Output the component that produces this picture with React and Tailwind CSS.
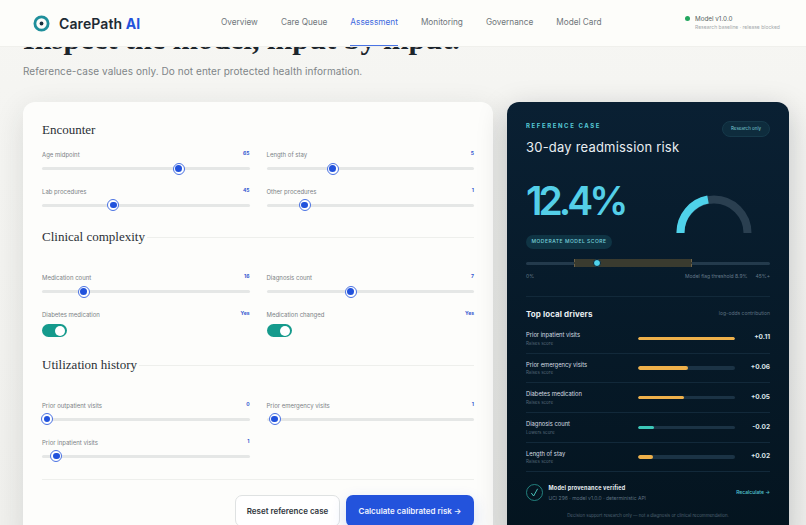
const nav = ['Overview', 'Care Queue', 'Assessment', 'Monitoring', 'Governance', 'Model Card']

const drivers = [
  { name: 'Prior inpatient visits', note: 'Raises score', width: 100, value: '+0.11', up: true },
  { name: 'Prior emergency visits', note: 'Raises score', width: 52, value: '+0.06', up: true },
  { name: 'Diabetes medication', note: 'Raises score', width: 47.5, value: '+0.05', up: true },
  { name: 'Diagnosis count', note: 'Lowers score', width: 17, value: '-0.02', up: false },
  { name: 'Length of stay', note: 'Raises score', width: 15.6, value: '+0.02', up: true },
]

function FieldHead({ label, value }) {
  return (
    <div className="flex h-[9px] items-center justify-between">
      <span className="text-[6px] leading-none text-[#7c8286]">{label}</span>
      <span className="-mt-[3px] text-[5px] font-bold leading-none text-[#3458d0]">{value}</span>
    </div>
  )
}

function Slider({ label, value, pos }) {
  return (
    <div className="h-[23.5px]">
      <FieldHead label={label} value={value} />
      <div className="relative mt-[3.5px] flex h-[11px] items-center">
        <div className="h-[3px] w-full rounded-full bg-[#e5e7e6]" />
        <div
          className="absolute flex h-[12px] w-[12px] -translate-x-1/2 items-center justify-center rounded-full border border-[#4a72e2] bg-white"
          style={{ left: `${pos}%` }}
        >
          <div className="h-[6.5px] w-[6.5px] rounded-full bg-[#2152dc]" />
        </div>
      </div>
    </div>
  )
}

function Toggle({ label }) {
  return (
    <div className="h-[27px]">
      <FieldHead label={label} value="Yes" />
      <div className="mt-[5px] flex h-[13px] w-[25px] items-center justify-end rounded-full bg-[#159a8c] pr-[2px]">
        <div className="h-[10px] w-[10px] rounded-full bg-white" />
      </div>
    </div>
  )
}

function SectionTitle({ children, line = true }) {
  return (
    <div className="flex h-4 items-center gap-[2px]">
      <h2 className="-mt-[2px] font-['Liberation_Serif',serif] text-[13px] leading-none text-[#2a3036]">{children}</h2>
      {line ? <div className="h-px flex-1 bg-[#eeefec]" /> : null}
    </div>
  )
}

function DriverRow({ item }) {
  return (
    <div className="grid h-[29.7px] grid-cols-[112px_97px_35px] items-center border-b border-[#12293a]">
      <div>
        <div className="text-[5.8px] leading-[9px] text-[#d5dde2]">{item.name}</div>
        <div className="mt-[0.5px] text-[4.5px] leading-[7px] text-[#536676]">{item.note}</div>
      </div>
      <div className="h-[3.5px] overflow-hidden rounded-full bg-[#1b3345]">
        <div className={`h-full rounded-full ${item.up ? 'bg-[#eeb04a]' : 'bg-[#3cc7b8]'}`} style={{ width: `${item.width}%` }} />
      </div>
      <div className="text-right text-[6.5px] font-bold text-[#dfe6ea]">{item.value}</div>
    </div>
  )
}

function Gauge() {
  return (
    <svg width="76" height="38" viewBox="0 0 76 38" className="mr-[18px] ml-auto mt-[14px] shrink-0">
      <path d="M4.5 38 A33.5 33.5 0 0 1 71.5 38" fill="none" stroke="#2a3f50" strokeWidth="8" />
      <path d="M4.5 38 A33.5 33.5 0 0 1 32 4.5" fill="none" stroke="#4fd2ea" strokeWidth="8" />
    </svg>
  )
}

function FormCard() {
  return (
    <section className="h-[440px] rounded-[12px] bg-[#fdfdfb] px-[19px] pt-[20px] shadow-[0_8px_30px_rgba(30,40,40,0.12)]">
      <SectionTitle line={false}>Encounter</SectionTitle>
      <div className="mt-[12.5px] grid grid-cols-2 gap-x-[17px] gap-y-[13px]">
        <Slider label="Age midpoint" value="65" pos={65.9} />
        <Slider label="Length of stay" value="5" pos={31.9} />
        <Slider label="Lab procedures" value="45" pos={34.4} />
        <Slider label="Other procedures" value="1" pos={18.4} />
      </div>
      <div className="mt-[18.5px]">
        <SectionTitle>Clinical complexity</SectionTitle>
      </div>
      <div className="mt-[28.5px] grid grid-cols-2 gap-x-[17px] gap-y-[13px]">
        <Slider label="Medication count" value="16" pos={20.1} />
        <Slider label="Diagnosis count" value="7" pos={40.5} />
        <Toggle label="Diabetes medication" />
        <Toggle label="Medication changed" />
      </div>
      <div className="mt-[20.5px]">
        <SectionTitle>Utilization history</SectionTitle>
      </div>
      <div className="mt-[27.5px] grid grid-cols-2 gap-x-[17px] gap-y-[13.5px]">
        <Slider label="Prior outpatient visits" value="0" pos={2.4} />
        <Slider label="Prior emergency visits" value="1" pos={3.9} />
        <Slider label="Prior inpatient visits" value="1" pos={6.9} />
      </div>
      <div className="mt-[17.5px] h-px bg-[#eeefec]" />
      <div className="mt-[14.5px] flex justify-end gap-[6px]">
        <button type="button" className="h-[32px] w-[105px] rounded-[7px] border border-[#dfe2e2] bg-white text-[8px] font-semibold text-[#30363c]">
          Reset reference case
        </button>
        <button type="button" className="h-[32px] w-[128px] rounded-[7px] bg-[#2353dc] text-[8px] font-semibold text-[#eef2ff] shadow-[0_6px_16px_rgba(35,83,220,0.18)]">
          Calculate calibrated risk →
        </button>
      </div>
    </section>
  )
}

function RiskCard() {
  return (
    <section className="h-[440px] rounded-[12px] bg-gradient-to-b from-[#0a2033] to-[#04141f] px-[19px] pt-[19px] shadow-[0_8px_30px_rgba(10,20,30,0.22)]">
      <div className="relative">
        <div className="h-[10px] text-[6px] font-bold leading-[10px] tracking-[1.6px] text-[#55c7d4]">REFERENCE CASE</div>
        <div className="absolute right-0 top-0 flex h-[16px] w-[48px] items-center justify-center rounded-full border border-[#16394a] bg-[#0e2c3d] text-[4.5px] text-[#79c8d4]">
          Research only
        </div>
        <h2 className="mt-[7px] h-[18px] text-[13px] leading-[18px] tracking-[0.2px] text-[#e8eef1]">30-day readmission risk</h2>
      </div>
      <div className="mt-[25px] flex">
        <div>
          <div className="h-[40px] text-[39px] font-semibold leading-[40px] tracking-[-4px] text-[#54cfe8]">12.4%</div>
          <div className="mt-[14px] flex h-[14px] w-[86px] items-center justify-center rounded-full bg-[#0f3444] text-[5px] font-medium tracking-[0.5px] text-[#79d3de]">
            MODERATE MODEL SCORE
          </div>
        </div>
        <Gauge />
      </div>
      <div className="relative mt-[10px] flex h-[8px] items-center">
        <div className="h-[3px] w-full rounded-full bg-[#233a4c]" />
        <div className="absolute left-[48px] h-[8px] w-[118px] border-x border-dashed border-[#6e6248] bg-[#3a3b2f]" />
        <div className="absolute left-[67px] h-[8px] w-[8px] rounded-full border border-[#0a2033] bg-[#4fd2ea]" />
      </div>
      <div className="mt-[5px] flex h-[8px] items-center justify-between text-[5px] leading-none text-[#64798a]">
        <span>0%</span>
        <span className="flex gap-[8px]">
          <span>Model flag threshold 8.9%</span>
          <span>45%+</span>
        </span>
      </div>
      <div className="mt-[16px] h-px bg-[#12293a]" />
      <div className="mt-[11.5px] flex h-[10px] items-center justify-between">
        <span className="text-[8px] font-bold leading-none tracking-[0.1px] text-[#e8eef1]">Top local drivers</span>
        <span className="text-[5px] leading-none text-[#5d7080]">log-odds contribution</span>
      </div>
      <div className="mt-[5.5px]">
        {drivers.map((d) => (
          <DriverRow key={d.name} item={d} />
        ))}
      </div>
      <div className="mt-[12px] flex h-[17px] items-center">
        <svg width="17" height="17" viewBox="0 0 17 17" className="shrink-0">
          <circle cx="8.5" cy="8.5" r="8" fill="none" stroke="#2b9c96" strokeWidth="0.8" />
          <path d="M5.3 9 L7.6 12 L11.6 4.8" fill="none" stroke="#4fd2c8" strokeWidth="0.9" />
        </svg>
        <div className="ml-[5.5px]">
          <div className="text-[5.5px] font-bold leading-[8px] tracking-[0.2px] text-[#e8eef1]">Model provenance verified</div>
          <div className="mt-[2px] text-[5px] leading-[8px] text-[#5d7080]">UCI 296 · model v1.0.0 · deterministic API</div>
        </div>
        <span className="ml-auto text-[5px] font-medium text-[#55c7d4]">Recalculate →</span>
      </div>
      <p className="mt-[11px] text-center text-[4.4px] leading-[8px] text-[#4f6272]">
        Decision support research only — not a diagnosis or clinical recommendation.
      </p>
    </section>
  )
}

export default function App() {
  return (
    <div className="relative h-[525px] w-[806px] overflow-hidden bg-gradient-to-b from-[#f6f6f3] to-[#f0f0ed] font-['Inter',sans-serif]">
      <header className="absolute inset-x-0 top-0 z-10 flex h-[47px] items-center border-b border-[#f0f0ec] bg-[#fdfdfa] pl-[33px]">
        <svg width="17" height="17" viewBox="0 0 17 17" className="shrink-0">
          <circle cx="8.5" cy="8.5" r="6.6" fill="none" stroke="#1f8f9b" strokeWidth="2.8" />
          <circle cx="8.5" cy="8.5" r="1.9" fill="#16303d" />
        </svg>
        <div className="ml-[9px] w-[162px] text-[14px] font-semibold tracking-[0.1px] text-[#1d2a33]">
          CarePath <span className="font-bold text-[#2353dc]">AI</span>
        </div>
        <nav className="flex h-full gap-[23px]">
          {nav.map((n) => (
            <a
              key={n}
              className={`flex h-full items-center border-b-[1.5px] text-[8.25px] ${n === 'Assessment' ? 'border-[#4a74e4] text-[#3f6ae0]' : 'border-transparent text-[#6f767a]'}`}
            >
              {n}
            </a>
          ))}
        </nav>
        <div className="ml-[83px] flex items-start gap-[5.5px]">
          <div className="mt-[1.5px] h-[5px] w-[5px] rounded-full bg-[#22a65e]" />
          <div>
            <div className="text-[6.3px] leading-[8px] text-[#565d62]">Model v1.0.0</div>
            <div className="mt-[1.5px] whitespace-nowrap text-[5px] leading-[7px] text-[#a3a8ab]">Research baseline · release blocked</div>
          </div>
        </div>
      </header>
      <main className="px-[23px] pt-[21px]">
        <h1 className="h-[36px] whitespace-nowrap font-['Liberation_Serif',serif] text-[30.3px] font-bold leading-[36px] text-[#1c252c]">
          Inspect the model, input by input.
        </h1>
        <p className="mt-[8px] h-[12px] text-[10px] leading-[12px] tracking-[0.06px] text-[#7f8588]">
          Reference-case values only. Do not enter protected health information.
        </p>
        <div className="mt-[25px] grid grid-cols-[470px_282px] gap-x-[14px]">
          <FormCard />
          <RiskCard />
        </div>
      </main>
    </div>
  )
}
